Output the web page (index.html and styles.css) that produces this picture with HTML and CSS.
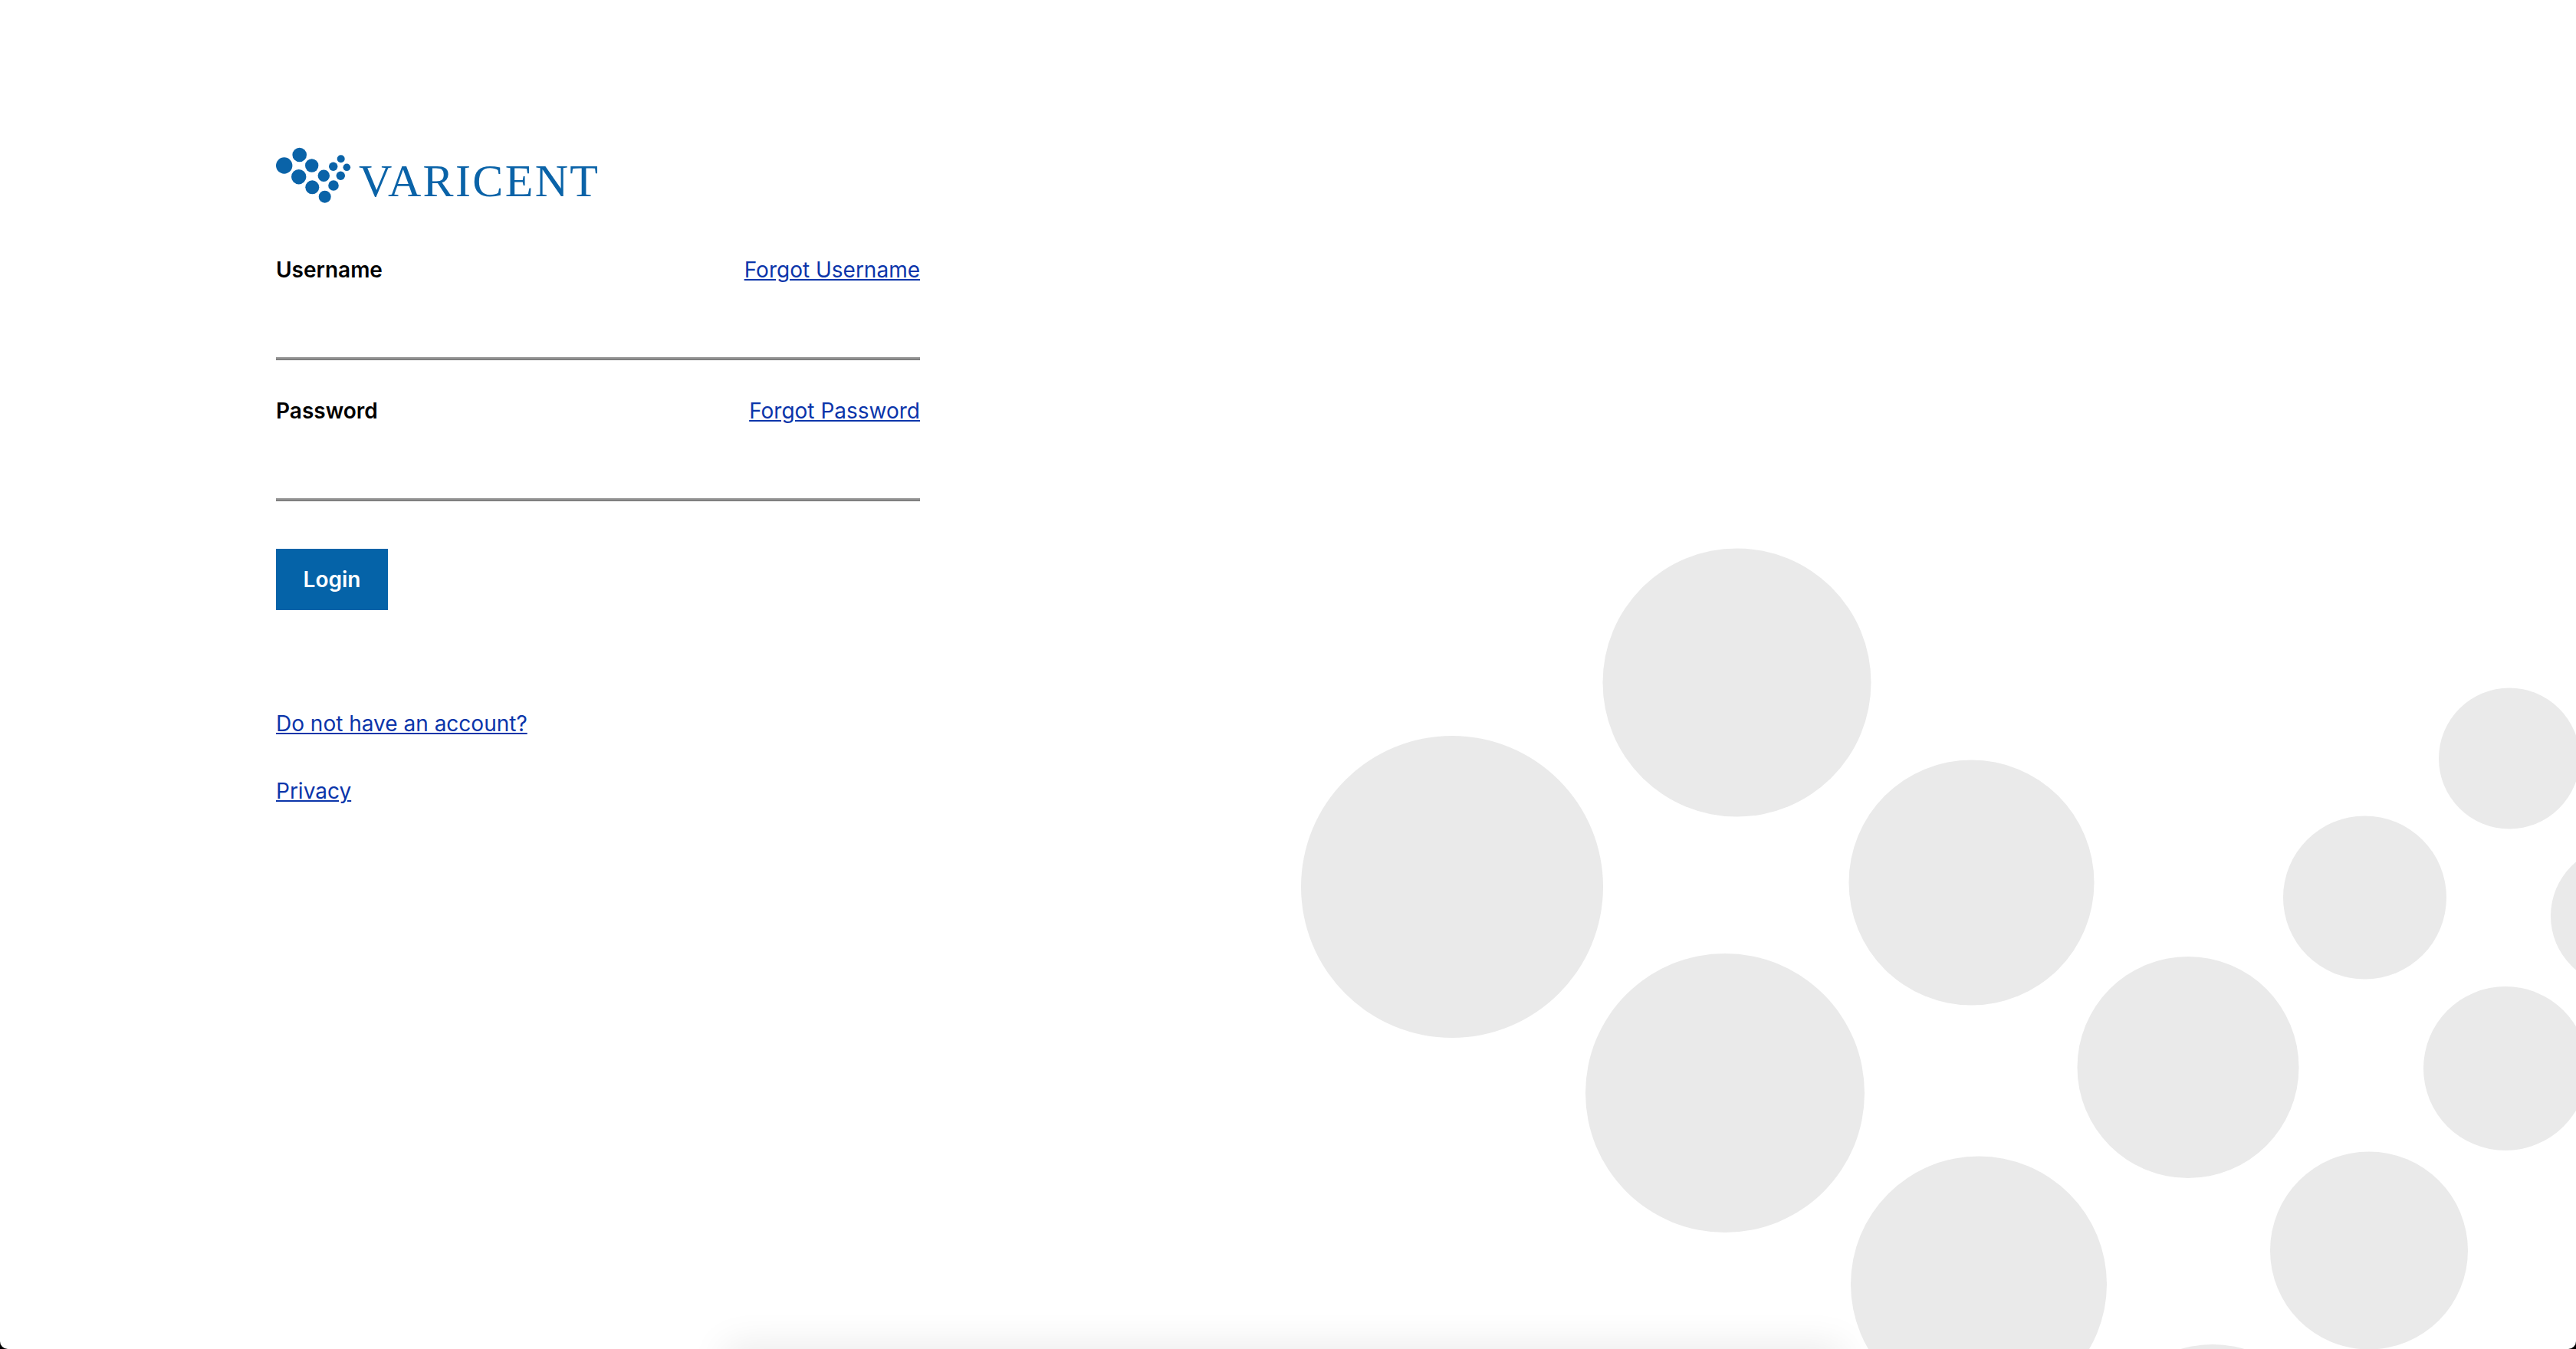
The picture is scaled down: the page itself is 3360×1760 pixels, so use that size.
FILE: index.html
```html
<!DOCTYPE html>
<html lang="en">
<head>
<meta charset="utf-8">
<title>Varicent Login</title>
<link rel="stylesheet" href="styles.css">
</head>
<body>
<main class="screen">
  <div class="bottom-glow"></div>
  <svg class="bubbles" viewBox="0 0 3360 1760" aria-hidden="true">
    <circle cx="1894" cy="1157" r="197"/>
    <circle cx="2265.5" cy="890.5" r="175"/>
    <circle cx="2571.5" cy="1151.5" r="160"/>
    <circle cx="2250" cy="1426" r="182"/>
    <circle cx="2581" cy="1675.5" r="167"/>
    <circle cx="3090" cy="1631.5" r="129"/>
    <circle cx="2886" cy="1901" r="147"/>
    <circle cx="2854" cy="1392.5" r="144.5"/>
    <circle cx="3084.5" cy="1171" r="106.5"/>
    <circle cx="3273" cy="989.5" r="92"/>
    <circle cx="3419" cy="1195" r="92"/>
    <circle cx="3268" cy="1394" r="107"/>
  </svg>
  <section class="panel">
    <svg class="logo" viewBox="0 0 440 76" role="img" aria-label="Varicent">
      <g class="logo-dots">
        <circle cx="10.7" cy="26" r="10.7"/>
        <circle cx="30.7" cy="12" r="9.3"/>
        <circle cx="46.7" cy="26" r="8.7"/>
        <circle cx="29.7" cy="40.7" r="9.7"/>
        <circle cx="47.3" cy="54.3" r="9"/>
        <circle cx="62.3" cy="39.3" r="7.7"/>
        <circle cx="63.7" cy="66.7" r="8"/>
        <circle cx="75" cy="52" r="6.8"/>
        <circle cx="74.7" cy="27.3" r="5.7"/>
        <circle cx="84.3" cy="39.3" r="5.7"/>
        <circle cx="84.7" cy="17.3" r="5"/>
        <circle cx="92.3" cy="28.3" r="4.8"/>
      </g>
      <text class="logo-word" x="108" y="66" textLength="312" lengthAdjust="spacing">VARICENT</text>
    </svg>
    <form class="form">
      <div class="field">
        <div class="field-head"><label class="label" for="u">Username</label><a class="link" href="#">Forgot Username</a></div>
        <input class="input" id="u" type="text">
      </div>
      <div class="field">
        <div class="field-head"><label class="label" for="p">Password</label><a class="link" href="#">Forgot Password</a></div>
        <input class="input" id="p" type="password">
      </div>
      <button class="login" type="button">Login</button>
    </form>
    <p class="extra extra-first"><a class="link" href="#">Do not have an account?</a></p>
    <p class="extra"><a class="link" href="#">Privacy</a></p>
  </section>
</main>
</body>
</html>
```
FILE: styles.css
```css
* { box-sizing: border-box; }
html, body { margin: 0; height: 100%; background: #000; }
body { font-family: Inter, "Liberation Sans", sans-serif; }
.screen {
  position: relative;
  width: 3360px;
  height: 1760px;
  overflow: hidden;
  background: #fff;
  border-radius: 0 0 10px 10px;
}
.bubbles { position: absolute; inset: 0; width: 100%; height: 100%; }
.bubbles circle { fill: #eaeaea; }
.bottom-glow {
  position: absolute;
  left: 950px;
  width: 1450px;
  bottom: -40px;
  height: 40px;
  box-shadow: 0 0 50px 4px rgba(0,0,0,.09);
}
.panel { position: relative; width: 840px; margin-left: 360px; padding-top: 190px; }
.logo { display: block; width: 440px; height: 76px; filter: blur(.5px); }
.logo-dots { fill: #0a63a8; }
.logo-word { fill: #0a63a8; font-family: "Liberation Serif", serif; font-size: 60px; }
.form { margin-top: 68px; }
.field { height: 184px; }
.field-head { display: flex; justify-content: space-between; align-items: center; height: 36px; }
.label { font-size: 28px; font-weight: 600; color: #000; }
.link { font-size: 28px; color: #0b35aa; text-decoration: underline; }
.input {
  display: block;
  width: 100%;
  height: 100px;
  padding: 0;
  border: 0;
  border-bottom: 2px solid #7f7f7f;
  box-shadow: inset 0 -2px 0 #949494;
  background: transparent;
  outline: none;
}
.login {
  display: block;
  width: 146px;
  height: 80px;
  margin-top: 14px;
  padding: 0;
  border: 0;
  background: #0563a8;
  color: #fff;
  font: 600 28px Inter, "Liberation Sans", sans-serif;
}
.extra { margin: 52px 0 0; font-size: 28px; line-height: 36px; }
.extra-first { margin-top: 130px; }
```
